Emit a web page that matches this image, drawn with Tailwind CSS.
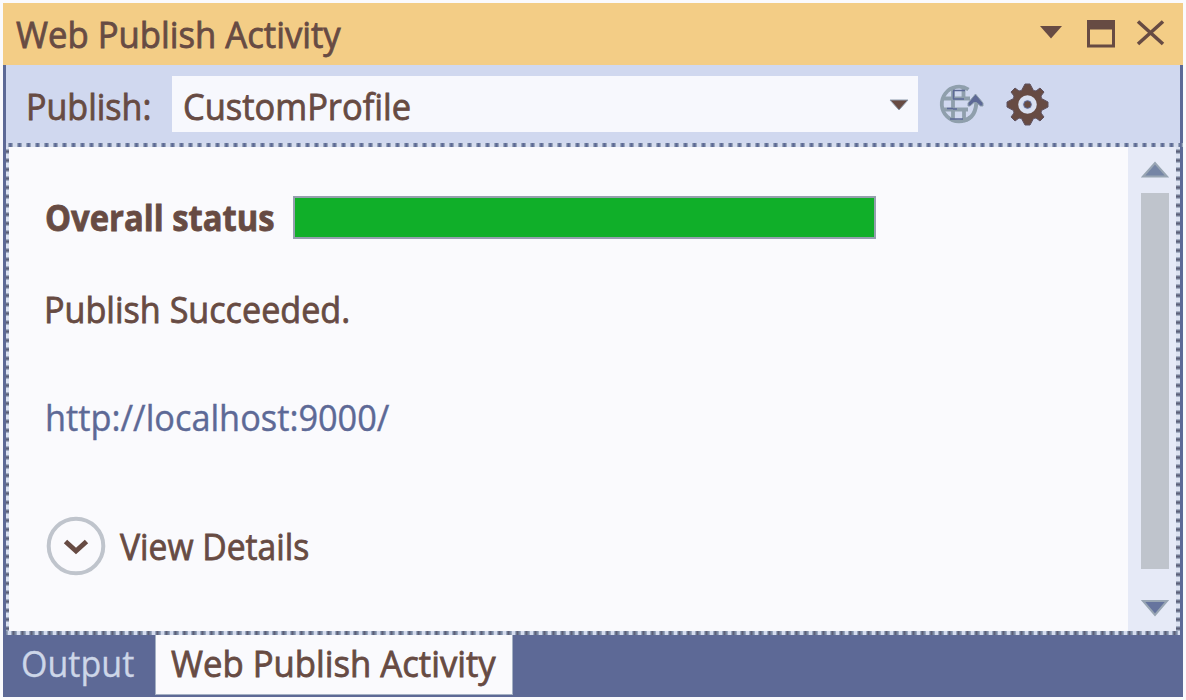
<!DOCTYPE html>
<html lang="en">
<head>
<meta charset="utf-8">
<title>Web Publish Activity</title>
<script src="https://cdn.jsdelivr.net/npm/@tailwindcss/browser@4"></script>
</head>
<body class="w-[1186px] h-[700px] overflow-hidden bg-[#fafafd] p-[3px] font-['Open_Sans','Noto_Sans',sans-serif] text-[36px] leading-[44px] text-[#674b43] whitespace-nowrap [-webkit-text-stroke:0.8px]">
<div class="flex flex-col w-[1180px] h-[694px]">
  <header class="flex h-[62px] shrink-0 bg-[#f3cd86] pl-[13px]">
    <h1 class="pt-[10px] origin-left scale-x-[0.963]">Web Publish Activity</h1>
    <svg class="ml-auto shrink-0" width="160" height="62" viewBox="1023 3 160 62" fill="none" stroke="#674b43">
      <path d="M1040 26h22l-11 12.500z" fill="#674b43" stroke="none"/>
      <path d="M1088.500 21.500h25v24.500h-25z" stroke-width="3"/>
      <path d="M1087 20h28v9.500h-28z" fill="#674b43" stroke="none"/>
      <path d="M1138 21.500l25 22.500M1163 21.500l-25 22.500" stroke-width="3.600"/>
    </svg>
  </header>
  <div class="flex h-[78px] shrink-0 border-x-[3px] border-[#5d6996] bg-[#d0d8ef] pl-[20px]">
    <span class="w-[146px] pt-[20px] origin-left scale-x-[0.945]">Publish:</span>
    <div class="mt-[11px] flex h-[56px] w-[746px] bg-[#f7f8fd] pl-[11px] pr-[9px]">
      <span class="pt-[9px] origin-left scale-x-[0.957]">CustomProfile</span>
      <svg class="ml-auto mt-[23px]" width="20" height="12" viewBox="0 0 20 12"><path d="M1 1h18l-9 10z" fill="#674b43" stroke="#8f9cac"/></svg>
    </div>
    <svg class="ml-[20px] mt-[15px]" width="120" height="48" viewBox="938 80 120 48" fill="none">
      <g stroke="#8f9fac" stroke-width="3.800">
        <path d="M968.500 89.500A17.300 17.300 0 1 0 970.500 117"/>
        <path d="M953 88v33M963.500 88v9M964 108v13M943 98.500h27M942 109.500h26"/>
        <path d="M964 120.500c9-2 12.500-9 12.500-21" stroke-width="4"/>
      </g>
      <path d="M953 90.500h12M953 99h11M953 109h4M947 108.500h6M950 119h13M953.500 91v8" stroke="#5d6996" stroke-width="1.500"/>
      <path d="M968 106v-3l7.500-9 7.500 9v3h-2.500l-4-3.500h-2.500l-4 3.500z" fill="#5d6996" stroke="#8f9fac"/>
      <g transform="translate(1027.500 104.500)" fill="#674b43" stroke="#5f5260" stroke-width="1" stroke-linejoin="round">
        <path d="M-2.500-20.500h5L6-14L8.500-13.500L12.500-16.500L16.500-12.500L13.500-8.500L14-6L20.500-2.500v5L14 6L13.500 8.500L16.500 12.500L12.500 16.500L8.500 13.500L6 14L2.500 20.500h-5L-6 14L-8.500 13.500L-12.500 16.500L-16.500 12.500L-13.500 8.500L-14 6L-20.500 2.500v-5L-14-6L-13.500-8.500L-16.500-12.500L-12.500-16.500L-8.500-13.500L-6-14z"/>
        <circle r="7.300" fill="#d0d8ef" stroke="#d9e0f1" stroke-width="4"/>
        <circle r="3.800" fill="#674b43" stroke="#5d6996"/>
      </g>
    </svg>
  </div>
  <div class="h-[4px] shrink-0 border-l-[3px] border-[#5d6996] bg-[repeating-linear-gradient(90deg,#d5dcee_0_1.5px,#7c8ba5_3px,#5d6996_4px_5px,#7c8ba5_6px,#d5dcee_7.5px_9px)]"></div>
  <div class="flex h-[484px] shrink-0 border-x-[3px] border-[#5d6996]">
    <div class="w-[3px] bg-[repeating-linear-gradient(180deg,#dce2f1_0_1.5px,#8995ac_3px,#5d6078_4px_5px,#8995ac_6px,#dce2f1_7.5px_9px)]"></div>
    <main class="flex flex-1 flex-col items-start pl-[36px]">
      <div class="mt-[48px] flex items-start">
        <span class="w-[248px] pt-[1px] origin-left scale-x-[0.91] font-bold">Overall status</span>
        <div class="mt-[1px] h-[43px] w-[583px] border-2 border-[#959fae] bg-[#10af29]"></div>
      </div>
      <p class="mt-[48px] -ml-px origin-left scale-x-[0.948]">Publish Succeeded.</p>
      <a class="mt-[64px] origin-left scale-x-[0.953] text-[#5d6996] [-webkit-text-stroke:0.4px]">http://localhost:9000/</a>
      <div class="mt-[76px] flex items-center gap-[14px]">
        <svg class="ml-[1px]" width="60" height="60" viewBox="0 0 60 60" fill="none"><circle cx="30" cy="30" r="27.300" stroke="#bfc4cc" stroke-width="4"/><path d="M19.500 25.500l10.500 9.500 10.500-9.500" stroke="#674b43" stroke-width="5"/></svg>
        <span class="pt-[2px] origin-left scale-x-[0.935]">View Details</span>
      </div>
    </main>
    <div class="flex w-[48px] flex-col items-center bg-[#e6eaf7] pl-[5px]">
      <svg class="mt-[14px]" width="28" height="17" viewBox="0 0 28 17"><path d="M2 15.500L14 2l12 13.500z" fill="#7585a5" stroke="#98a5b3" stroke-width="2"/></svg>
      <div class="mt-[15px] h-[376px] w-[28px] bg-[#bfc4cc]"></div>
      <svg class="mt-[30px]" width="28" height="18" viewBox="0 0 28 18"><path d="M2 2h24L14 16z" fill="#66749e" stroke="#98a5b3" stroke-width="2"/></svg>
    </div>
    <div class="w-[4px] bg-[repeating-linear-gradient(180deg,#dce2f1_0_1.5px,#8995ac_3px,#5d6078_4px_5px,#8995ac_6px,#dce2f1_7.5px_9px)]"></div>
  </div>
  <div class="h-[4px] shrink-0 border-x-[3px] border-[#5d6996] bg-[repeating-linear-gradient(90deg,#7c8ba5_0_1px,#d5dcee_2.5px_4.5px,#7c8ba5_6px,#5d6078_7px_8px,#7c8ba5_9px)]"></div>
  <footer class="flex h-[62px] shrink-0 bg-[#5d6996]">
    <div class="w-[152px] pl-[18px] pt-[7px] text-[#cdd6e8] [-webkit-text-stroke:0.3px]"><span class="inline-block origin-left scale-x-[0.945]">Output</span></div>
    <div class="h-[60px] w-[358px] border-x border-b border-[#a5b1c4] bg-[#fafafd] pl-[15px] pt-[7px]"><span class="inline-block origin-left scale-x-[0.963]">Web Publish Activity</span></div>
  </footer>
</div>
</body>
</html>
